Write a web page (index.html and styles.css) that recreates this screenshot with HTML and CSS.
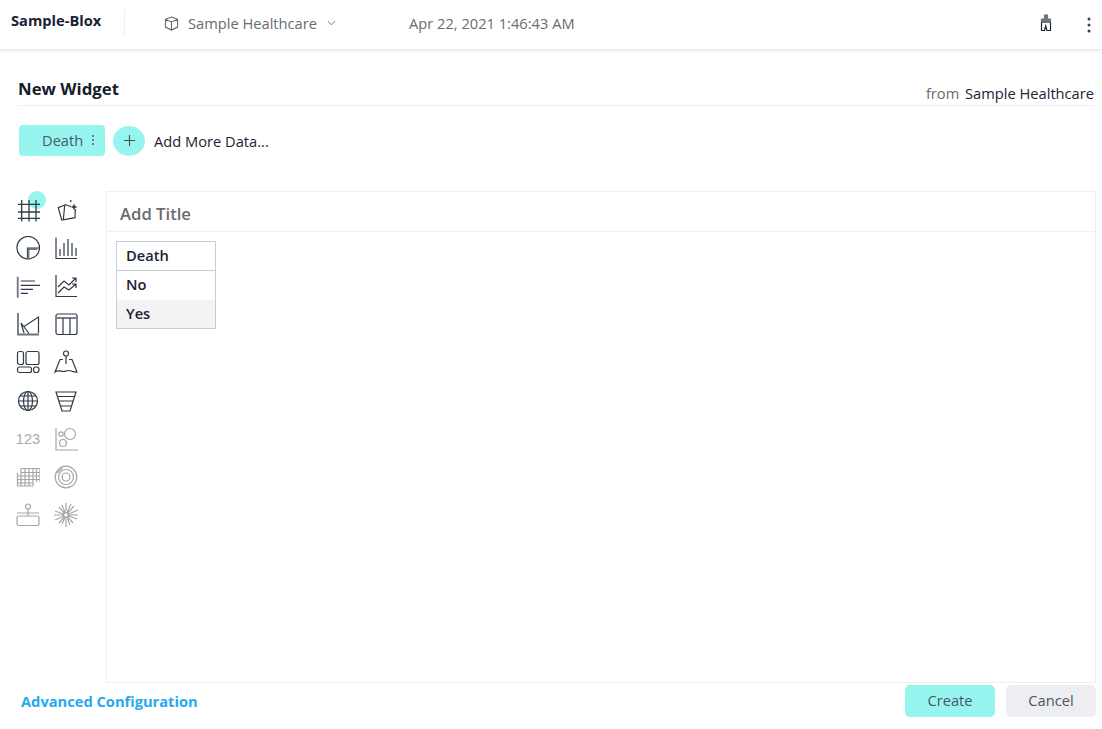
FILE: index.html
```html
<!DOCTYPE html>
<html lang="en">
<head>
<meta charset="utf-8">
<title>New Widget</title>
<link rel="stylesheet" href="styles.css">
</head>
<body>
<header class="topbar">
  <div class="brand">Sample-Blox</div>
  <div class="crumb">
    <svg class="cube" viewBox="0 0 16 16"><path d="M8 1 L14.5 3.6 V11.8 L8 15 L1.5 11.8 V3.6 Z M1.5 3.6 L8 6.4 L14.5 3.6 M8 6.4 V15"/></svg>
    <span>Sample Healthcare</span>
    <svg class="chev" viewBox="0 0 10 6"><path d="M1 1 L5 5 L9 1"/></svg>
  </div>
  <div class="date">Apr 22, 2021 1:46:43 AM</div>
  <div class="top-actions">
    <svg class="brush" viewBox="0 0 12 18"><path class="fill" d="M4.500 1 H7.500 V5 H4.500 Z"/><path class="fill" d="M1.500 5 H10.500 V8.500 H1.500 Z"/><path d="M1.500 8.500 V16.500 H4.500 L5.700 12 L7 16.500 H10.500 V8.500"/></svg>
    <svg class="kebab" viewBox="0 0 4 16"><circle cx="2" cy="2" r="1.500"/><circle cx="2" cy="8" r="1.500"/><circle cx="2" cy="14" r="1.500"/></svg>
  </div>
</header>

<main class="page">
  <div class="heading">
    <h1>New Widget</h1>
    <div class="source"><span class="from">from</span> Sample Healthcare</div>
  </div>

  <div class="data-row">
    <div class="chip"><span>Death</span><svg class="chip-menu" viewBox="0 0 4 12"><circle cx="2" cy="2" r="1"/><circle cx="2" cy="6" r="1"/><circle cx="2" cy="10" r="1"/></svg></div>
    <button class="add" type="button"><svg viewBox="0 0 14 14"><path d="M7 1 V13 M1 7 H13"/></svg></button>
    <span class="add-label">Add More Data...</span>
  </div>

  <div class="workspace">
    <nav class="palette">
      <div class="tool active"><svg viewBox="0 0 24 24"><path class="bold" d="M5.700 2 V23.500 M13 2 V23.500 M20 2 V23.500 M2 6.300 H24 M2 14 H24 M2 20.300 H24"/></svg></div>
      <div class="tool"><svg viewBox="0 0 24 24"><path d="M10.800 7 L4.300 9.700 L7.700 22 L21 19.700 L21.300 11 M10.800 6.500 L17 8.500 M10.800 6.500 L9.300 22"/><circle class="solid" cx="16.700" cy="3" r="0.900"/><path class="solid" d="M20 5.500 L21 8 L23.500 9 L21 10 L20 12.500 L19 10 L16.500 9 L19 8 Z"/></svg></div>
      <div class="tool"><svg viewBox="0 0 24 24"><path d="M11 23 A11.300 11.300 0 1 1 23.500 12"/><path d="M11.500 12 H23.500 C23.500 18 19 22 13 23 L11.500 23 Z"/><path class="thick" d="M12.500 13 V23 M12.500 13 H21"/></svg></div>
      <div class="tool"><svg viewBox="0 0 24 24"><path d="M2 1.500 V22.500 H23 M6 20 V13 M10 20 V7 M14 20 V3 M18 20 V7 M22 20 V12"/></svg></div>
      <div class="tool"><svg viewBox="0 0 24 24"><path class="thick" d="M1.700 2.700 V23.700"/><path d="M4.700 7 H19 M4.700 11.300 H24 M4.700 15.300 H17 M4.700 19.300 H12"/></svg></div>
      <div class="tool"><svg viewBox="0 0 24 24"><path d="M2 1 V22.500 H23 M4 13 L10 7 L15 11 L22 4 M18 4 H22 V8 M4 19 L10 13 L15 16 L22 10 M18 10 H22 V14"/></svg></div>
      <div class="tool"><svg viewBox="0 0 24 24"><path class="thick" d="M2 1 V22.500 H23"/><path d="M5 11 L8 21 M5 11 L13 21.500 M8 14.500 L22.500 5 V21"/></svg></div>
      <div class="tool"><svg viewBox="0 0 24 24"><rect x="2" y="2" width="21" height="20.500" rx="2"/><path class="thick" d="M2 6 H23"/><path d="M9 6 V22 M16 6 V22"/></svg></div>
      <div class="tool"><svg viewBox="0 0 24 24"><rect x="1.500" y="1.500" width="6" height="13" rx="2"/><rect x="10" y="1.500" width="13" height="13" rx="2"/><rect x="1.500" y="17" width="14" height="5.500" rx="2"/><rect x="17.500" y="17" width="5.500" height="5.500" rx="2.500"/></svg></div>
      <div class="tool"><svg viewBox="0 0 24 24"><circle cx="12" cy="3.500" r="2.500"/><path d="M12 6 V14 M9 9.500 H6 L1 22 C5 19 8 23 12 21 C16 19 19 23 23 22 L18 9.500 H15"/></svg></div>
      <div class="tool"><svg viewBox="0 0 24 24"><circle cx="12" cy="12" r="9.500"/><ellipse cx="12" cy="12" rx="4.500" ry="9.500"/><path d="M12 2.500 V21.500 M2.500 12 H21.500 M4 7 H20 M4 17 H20"/></svg></div>
      <div class="tool"><svg viewBox="0 0 24 24"><path d="M2 3 H22 L16 22 H8 Z M3.500 7.500 H20.500 M5 12 H19 M6.500 17 H17.500"/></svg></div>
      <div class="tool muted"><span class="num">123</span></div>
      <div class="tool muted"><svg viewBox="0 0 24 24"><path d="M2 1 V23 H24"/><circle cx="16" cy="7" r="5.500"/><circle cx="7" cy="7" r="2.200"/><circle cx="9" cy="16" r="3.500"/></svg></div>
      <div class="tool muted"><svg viewBox="0 0 24 24"><path d="M1.500 8 V21 M5 3.500 V21 M9 3.500 V21 M13 3.500 V21 M17 3.500 V21 M20.500 3.500 V17 M24 3.500 V17 M5 3.500 H24 M5 7.500 H24 M1.500 11 H24 M1.500 14.500 H24 M1.500 18 H17 M1.500 21 H17"/></svg></div>
      <div class="tool muted"><svg viewBox="0 0 24 24"><circle cx="12" cy="12" r="10.800"/><circle cx="12" cy="12" r="7.500"/><circle cx="12" cy="12" r="4"/><path d="M3 8 L8 3"/></svg></div>
      <div class="tool muted"><svg viewBox="0 0 24 24"><circle cx="12" cy="3.500" r="2.500"/><path d="M12 6 V10 M1 10 H23 M12 10 V13"/><rect x="1" y="13" width="22" height="9.500" rx="2"/></svg></div>
      <div class="tool muted"><svg class="burst" viewBox="0 0 26 26"><path d="M13 1 V9 M13 17 V25 M1 13 H25 M6 5 L20 21 M21 4 L6 21 M9 3 L17 23 M18 2 L9 22 M2 9 L24 17 M25 8 L2 18"/><circle class="hole" cx="13" cy="13" r="2.500"/></svg></div>
    </nav>

    <section class="panel">
      <div class="panel-title">Add Title</div>
      <div class="panel-body">
        <table class="pivot">
          <thead><tr><th>Death</th></tr></thead>
          <tbody>
            <tr><td>No</td></tr>
            <tr class="alt"><td>Yes</td></tr>
          </tbody>
        </table>
      </div>
    </section>
  </div>

  <footer class="footer">
    <a class="advanced" href="#">Advanced Configuration</a>
    <div class="buttons">
      <button class="btn create" type="button">Create</button>
      <button class="btn cancel" type="button">Cancel</button>
    </div>
  </footer>
</main>
</body>
</html>
```

FILE: styles.css
```css
* { box-sizing: border-box; }
html, body { height: 100%; }
body {
  margin: 0;
  background: #fff;
  font-family: "Open Sans", "Liberation Sans", sans-serif;
  color: #1a2433;
  overflow: hidden;
}
.topbar {
  height: 49px;
  display: flex;
  align-items: center;
  background: #fff;
  box-shadow: 0 1px 4px rgba(0, 0, 0, 0.14);
  position: relative;
}
.brand {
  width: 125px;
  height: 27px;
  margin-top: -2px;
  padding-left: 11px;
  font-size: 14.67px;
  font-weight: 700;
  line-height: 21px;
  border-right: 1px solid #eceef0;
  color: #1a2433;
}
.crumb {
  display: flex;
  align-items: center;
  margin-left: 39px;
  width: 245px;
  height: 20px;
  margin-top: -3px;
  font-size: 14.67px;
  color: #6b6b70;
}
.cube { width: 15px; height: 15px; margin-right: 9px; fill: none; stroke: #5f6368; stroke-width: 1.1; }
.chev { width: 9px; height: 6px; margin-left: 10px; fill: none; stroke: #5f6368; stroke-width: 1; }
.date { font-size: 14.67px; color: #6b6b70; margin-top: -3px; }
.top-actions { margin-left: auto; display: flex; align-items: center; }
.brush { width: 12px; height: 18px; fill: none; stroke: #20262e; stroke-width: 1.2; margin-right: 35px; margin-top: -3px; }
.brush .fill { fill: #6f7479; stroke: #6f7479; }
.kebab { width: 4px; height: 16px; fill: #3a4048; margin-right: 11px; }

.page {
  height: 680px;
  padding: 0 6px 12px 18px;
  display: flex;
  flex-direction: column;
}
.heading {
  margin-top: 26px;
  height: 31px;
  margin-right: 2px;
  display: flex;
  justify-content: space-between;
  align-items: flex-start;
  border-bottom: 1px solid #eceef0;
}
h1 {
  margin: 0;
  font-size: 16.8px;
  font-weight: 700;
  line-height: 27px;
  color: #141e2b;
}
.source { font-size: 14.67px; line-height: 20px; margin-top: 8px; color: #1a2433; }
.from { color: #6b6b70; margin-right: 2px; }

.data-row { display: flex; align-items: center; margin-top: 19px; height: 31px; }
.chip {
  width: 86px;
  height: 31px;
  margin-left: 1px;
  padding: 0 0 2px 23px;
  background: #96f5ef;
  border-radius: 4px;
  display: flex;
  align-items: center;
  font-size: 14.67px;
  color: #4b5a68;
}
.chip-menu { width: 4px; height: 12px; margin-left: 8px; fill: #4b5a68; }
.add {
  width: 32px;
  height: 30px;
  margin-left: 8px;
  padding: 0;
  border: 0;
  border-radius: 50%;
  background: #96f5ef;
  display: flex;
  align-items: center;
  justify-content: center;
}
.add svg { width: 13px; height: 13px; fill: none; stroke: #44525f; stroke-width: 1.2; }
.add-label { margin-left: 9px; font-size: 14.67px; color: #1a2433; }

.workspace { flex: 1; display: flex; margin-top: 35px; min-height: 0; }
.palette {
  width: 90px;
  margin-left: -9px;
  margin-right: 7px;
  display: grid;
  grid-template-columns: 38px 38px;
  grid-auto-rows: 38.1px;
  align-content: start;
}
.tool { display: flex; align-items: center; justify-content: center; position: relative; }
.tool svg { width: 24px; height: 24px; fill: none; stroke: #2f3a46; stroke-width: 1.2; position: relative; }
.tool .bold { stroke-width: 1.3; }
.tool .thick { stroke-width: 1.8; stroke: #6b7480; }
.tool .solid { fill: #2f3a46; stroke: none; }
.tool.active::before {
  content: "";
  position: absolute;
  left: 19px;
  top: 0;
  width: 18px;
  height: 18px;
  border-radius: 50%;
  background: #96f5ef;
}
.tool.muted svg { stroke: #a3a6aa; }
.tool .hole { fill: #fff; stroke: #a3a6aa; stroke-width: 1.6; }
.tool .burst { width: 26px; height: 26px; }
.num { font-size: 14.67px; color: #a8abaf; font-family: "Liberation Sans", sans-serif; }

.panel {
  flex: 1;
  border: 1px solid #eff0f2;
  display: flex;
  flex-direction: column;
}
.panel-title {
  height: 40px;
  padding-left: 13px;
  font-size: 16.67px;
  font-weight: 600;
  line-height: 43px;
  color: #6b6b70;
  border-bottom: 1px solid #eff0f2;
}
.panel-body { flex: 1; padding: 9px; }
.pivot {
  width: 100px;
  border-collapse: collapse;
  border: 1px solid #c9ccd6;
  font-size: 14.67px;
  color: #1a2433;
}
.pivot th, .pivot td {
  height: 29px;
  padding: 0 0 2px 9px;
  text-align: left;
  font-weight: 600;
}
.pivot th { border-bottom: 1px solid #c9ccd6; }
.pivot .alt { background: #f3f3f4; }

.footer {
  height: 34px;
  display: flex;
  justify-content: space-between;
  align-items: flex-end;
}
.advanced {
  margin-left: 3px;
  margin-bottom: 6px;
  font-size: 14.67px;
  font-weight: 700;
  color: #27a9ef;
  text-decoration: none;
}
.buttons { display: flex; gap: 11px; }
.btn {
  width: 90px;
  height: 32px;
  padding: 0 0 2px;
  border: 0;
  border-radius: 5px;
  font-family: inherit;
  font-size: 14.67px;
  color: #4b5563;
}
.create { background: #96f5ef; }
.cancel { background: #edeef2; }
```
